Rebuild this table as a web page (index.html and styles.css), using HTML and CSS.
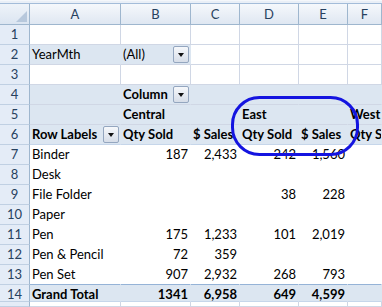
FILE: index.html
```html
<!DOCTYPE html>
<html>
<head>
<meta charset="utf-8">
<link rel="stylesheet" href="styles.css">
</head>
<body>
<div class="frame">
  <div class="topbar"></div>
  <div class="sheet">
    <div class="corner"><span class="tri"></span></div>
    <div class="ch">A</div><div class="ch">B</div><div class="ch">C</div><div class="ch">D</div><div class="ch">E</div><div class="ch">F</div>

    <div class="rn">1</div><div class="c"></div><div class="c"></div><div class="c"></div><div class="c"></div><div class="c"></div><div class="c"></div>

    <div class="rn">2</div><div class="c band">YearMth</div><div class="c band fx"><span class="t">(All)</span><span class="dd"></span></div><div class="c"></div><div class="c"></div><div class="c"></div><div class="c"></div>

    <div class="rn">3</div><div class="c"></div><div class="c"></div><div class="c"></div><div class="c"></div><div class="c"></div><div class="c"></div>

    <div class="rn">4</div><div class="c band"></div><div class="c band b fx"><span class="t">Column</span><span class="dd"></span></div><div class="c band"></div><div class="c band"></div><div class="c band"></div><div class="c band"></div>

    <div class="rn">5</div><div class="c band"></div><div class="c band b">Central</div><div class="c band"></div><div class="c band b">East</div><div class="c band"></div><div class="c band b">West</div>

    <div class="rn">6</div><div class="c band hl b fx"><span class="t">Row Labels</span><span class="dd"></span></div><div class="c band hl b">Qty Sold</div><div class="c band hl b">$ Sales</div><div class="c band hl b">Qty Sold</div><div class="c band hl b">$ Sales</div><div class="c band hl b">Qty Sold</div>

    <div class="rn">7</div><div class="c w">Binder</div><div class="c w n">187</div><div class="c w n">2,433</div><div class="c w n">242</div><div class="c w n">1,560</div><div class="c w"></div>

    <div class="rn">8</div><div class="c w">Desk</div><div class="c w"></div><div class="c w"></div><div class="c w"></div><div class="c w"></div><div class="c w"></div>

    <div class="rn">9</div><div class="c w">File Folder</div><div class="c w"></div><div class="c w"></div><div class="c w n">38</div><div class="c w n">228</div><div class="c w"></div>

    <div class="rn">10</div><div class="c w">Paper</div><div class="c w"></div><div class="c w"></div><div class="c w"></div><div class="c w"></div><div class="c w"></div>

    <div class="rn">11</div><div class="c w">Pen</div><div class="c w n">175</div><div class="c w n">1,233</div><div class="c w n">101</div><div class="c w n">2,019</div><div class="c w"></div>

    <div class="rn">12</div><div class="c w">Pen &amp; Pencil</div><div class="c w n">72</div><div class="c w n">359</div><div class="c w"></div><div class="c w"></div><div class="c w"></div>

    <div class="rn">13</div><div class="c w tl">Pen Set</div><div class="c w tl n">907</div><div class="c w tl n">2,932</div><div class="c w tl n">268</div><div class="c w tl n">793</div><div class="c w tl"></div>

    <div class="rn">14</div><div class="c band gt b">Grand Total</div><div class="c band gt b n">1341</div><div class="c band gt b n">6,958</div><div class="c band gt b n">649</div><div class="c band gt b n">4,599</div><div class="c band gt"></div>

    <div class="rn"></div><div class="c"></div><div class="c"></div><div class="c"></div><div class="c"></div><div class="c"></div><div class="c"></div>
  </div>
  <svg class="callout" width="130" height="62" viewBox="0 0 130 62"><rect x="1.5" y="1.5" width="125" height="57" rx="27" ry="27" fill="none" stroke="#1414e0" stroke-width="3"/></svg>
</div>
</body>
</html>
```
FILE: styles.css
```css
html, body {
  margin: 0;
  padding: 0;
  background: #ffffff;
}
.frame {
  position: relative;
  width: 382px;
  height: 307px;
  overflow: hidden;
  font-family: Lato, "Liberation Sans", sans-serif;
  font-size: 13px;
  color: #000;
}
.topbar {
  height: 4px;
  box-sizing: border-box;
  background: #e9eff7;
  border-top: 1px solid #f4f7fb;
  border-bottom: 1px solid #a3bcd9;
}
.sheet {
  display: grid;
  grid-template-columns: 30px 91px 70px 49px 59px 49px 1fr;
  grid-template-rows: 21px repeat(13, 20px) 17px 1fr;
  height: 303px;
}
.sheet > div {
  box-sizing: border-box;
  white-space: nowrap;
  overflow: hidden;
  line-height: 19px;
}
.corner {
  position: relative;
  background: linear-gradient(#eef3f9, #dbe5f1);
  border-right: 1px solid #9eb6ce;
  border-bottom: 1px solid #9eb6ce;
}
.tri {
  position: absolute;
  right: 2px;
  bottom: 2px;
  width: 0;
  height: 0;
  border-left: 11px solid transparent;
  border-bottom: 11px solid #b7c8dc;
}
.ch {
  background: linear-gradient(#f5f8fc, #dfe7f2);
  border-right: 1px solid #9eb6ce;
  border-bottom: 1px solid #9eb6ce;
  text-align: center;
  color: #27415e;
  padding-top: 1px;
}
.rn {
  background: #e4ecf7;
  border-right: 1px solid #9eb6ce;
  border-bottom: 1px solid #c0d0e3;
  text-align: center;
  color: #27415e;
}
.c {
  border-right: 1px solid #d0d7e5;
  border-bottom: 1px solid #d0d7e5;
  padding: 0 2px;
}
.band {
  background: #dce6f1;
  border-right-color: #dce6f1;
}
.band.hl {
  border-bottom-color: #c6d6ea;
}
.w {
  background: #fff;
  border-right-color: #fff;
  border-bottom-color: #fff;
}
.tl {
  border-bottom-color: #95b3d7;
}
.gt {
  border-bottom-color: #c6d6ea;
}
.b {
  font-weight: 700;
}
.n {
  text-align: right;
}
.fx {
  display: flex;
  align-items: center;
  padding-right: 1px;
}
.fx .t {
  flex: 1 1 auto;
  min-width: 0;
  overflow: hidden;
}
.dd {
  flex: 0 0 auto;
  box-sizing: border-box;
  width: 16px;
  height: 17px;
  border: 1px solid #94a6bf;
  border-radius: 2px;
  background: linear-gradient(#f6f8fb, #d6dde8);
  display: flex;
  align-items: center;
  justify-content: center;
}
.dd::after {
  content: "";
  width: 0;
  height: 0;
  border-left: 3.5px solid transparent;
  border-right: 3.5px solid transparent;
  border-top: 4px solid #111;
}
.callout {
  position: absolute;
  left: 231px;
  top: 96px;
}
```
